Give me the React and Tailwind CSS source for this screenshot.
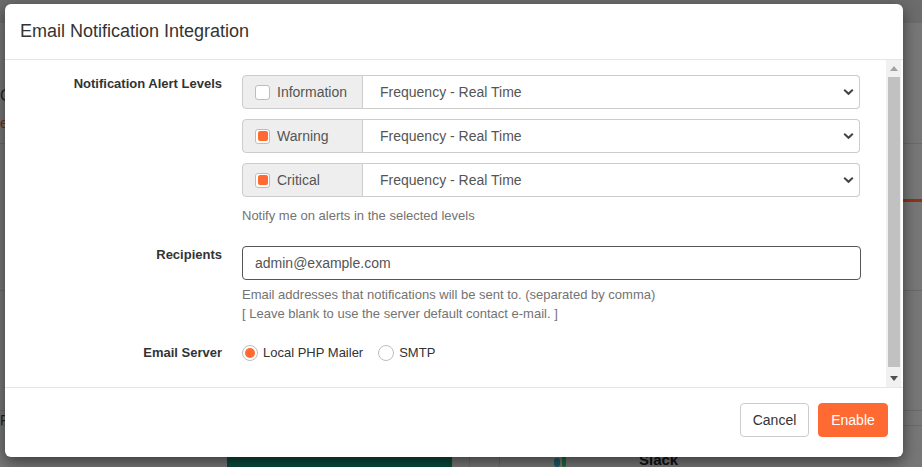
import React, { useState } from "react";

const levels = [
  { name: "Information", checked: false },
  { name: "Warning", checked: true },
  { name: "Critical", checked: true },
];

const Chevron = () => (
  <svg
    width="11"
    height="7"
    viewBox="0 0 11 7"
    className="pointer-events-none absolute right-[6px] top-1/2 -translate-y-1/2"
  >
    <path d="M1.2 1.2 L5.5 5.3 L9.8 1.2" fill="none" stroke="#444" strokeWidth="2" />
  </svg>
);

const Check = ({ checked }) => (
  <span className="flex h-[15px] w-[15px] shrink-0 items-center justify-center rounded-[3px] border border-[#bdbdbd] bg-white">
    {checked && <span className="h-[10px] w-[10px] rounded-[2px] bg-[#ff6a33]" />}
  </span>
);

const Radio = ({ checked }) => (
  <span className="flex h-[16px] w-[16px] shrink-0 items-center justify-center rounded-full border border-[#bdbdbd] bg-white">
    {checked && <span className="h-[10px] w-[10px] rounded-full bg-[#ff6a33]" />}
  </span>
);

const ScrollBar = () => (
  <div className="mr-[2px] flex w-[15px] shrink-0 flex-col bg-[#f1f1f1]">
    <div className="flex h-[17px] items-center justify-center">
      <svg width="8" height="5" viewBox="0 0 8 5">
        <path d="M0 5 L4 0 L8 5 Z" fill="#a3a3a3" />
      </svg>
    </div>
    <div className="flex-1 py-0 pl-[2px] pr-[1px]">
      <div className="h-[290px] bg-[#c1c1c1]" />
    </div>
    <div className="flex h-[17px] items-center justify-center">
      <svg width="8" height="5" viewBox="0 0 8 5">
        <path d="M0 0 L8 0 L4 5 Z" fill="#505050" />
      </svg>
    </div>
  </div>
);

// the dimmed page that sits behind the dialog
const Backdrop = () => (
  <div className="absolute inset-0 bg-[#777777]">
    <div className="h-[23px] bg-[#6c6c6c]" />
    <div className="absolute left-0 top-[84px] text-[16px] text-[#222]">C</div>
    <div className="absolute left-0 top-[112px] text-[15px] text-[#7a2a12]">e</div>
    <div className="absolute left-0 top-[410px] text-[14px] text-[#222]">F</div>
    <div className="absolute left-0 right-0 top-[143px] h-px bg-[#6a6a6a]" />
    <div className="absolute left-0 right-0 top-[290px] h-px bg-[#6a6a6a]" />
    <div className="absolute left-[903px] right-0 top-[199px] h-[3px] bg-[#8a3618]" />
    <div className="absolute left-0 right-0 top-[410px] h-px bg-[#6a6a6a]" />
    <div className="absolute left-0 right-0 top-[425px] h-px bg-[#6a6a6a]" />
    <div className="absolute left-[227px] top-[440px] flex h-[40px] w-[225px] items-end justify-center bg-[#0b4a3c] pb-[22px] text-[13px] text-[#5f8a80]">
      Install
    </div>
    <div className="absolute left-[469px] top-[440px] h-[40px] w-px bg-[#6a6a6a]" />
    <div className="absolute left-[499px] top-[440px] h-[40px] w-px bg-[#6a6a6a]" />
    <div className="absolute left-[554px] top-[458px] h-[9px] w-[6px] rounded-sm bg-[#1d5a6a]" />
    <div className="absolute left-[562px] top-[455px] h-[12px] w-[4px] rounded-sm bg-[#1a6a3a]" />
    <div className="absolute left-[639px] top-[449px] text-[15px] font-bold text-[#111]">Slack</div>
  </div>
);

export default function App() {
  const [server, setServer] = useState("local");

  return (
    <div
      className="relative h-[467px] w-[922px] overflow-hidden"
      style={{ fontFamily: '"Liberation Sans", Arial, sans-serif' }}
    >
      <Backdrop />

      {/* Dialog */}
      <div className="absolute left-[5px] top-[4px] flex h-[453px] w-[898px] flex-col overflow-hidden rounded-[6px] bg-white shadow-[0_5px_15px_rgba(0,0,0,0.5)]">
        <div className="flex h-[56px] shrink-0 items-center border-b border-[#e5e5e5] px-[15px]">
          <h4 className="text-[18px] text-[#333]">Email Notification Integration</h4>
        </div>

        {/* Body */}
        <div className="flex h-[327px] shrink-0">
          <div className="flex-1 overflow-hidden pb-[28px] pr-[26px] pt-[15px]">
            <div className="flex">
              <div className="w-[217px] shrink-0 text-right text-[13px] font-bold leading-[18px] text-[#333]">
                Notification Alert Levels
              </div>
              <div className="ml-[20px] flex-1">
                <div className="flex flex-col gap-[10px]">
                  {levels.map((lvl) => (
                    <div key={lvl.name} className="flex h-[34px]">
                      <div className="flex w-[121px] shrink-0 items-center gap-[7px] rounded-l-[4px] border border-[#ccc] bg-[#eeeeee] pl-[12px] text-[14px] text-[#555]">
                        <Check checked={lvl.checked} />
                        <span>{lvl.name}</span>
                      </div>
                      <div className="relative flex-1">
                        <select className="h-[34px] w-full appearance-none rounded-r-[4px] border border-l-0 border-[#ccc] bg-white pl-[17px] text-[14px] text-[#555] outline-none">
                          <option>Frequency - Real Time</option>
                          <option>Frequency - Hourly</option>
                          <option>Frequency - Daily</option>
                        </select>
                        <Chevron />
                      </div>
                    </div>
                  ))}
                </div>
                <p className="mt-[10px] text-[13px] leading-[18px] text-[#737373]">
                  Notify me on alerts in the selected levels
                </p>
              </div>
            </div>

            <div className="mt-[21px] flex">
              <div className="w-[217px] shrink-0 text-right text-[13px] font-bold leading-[18px] text-[#333]">
                Recipients
              </div>
              <div className="ml-[20px] flex-1">
                <input
                  type="text"
                  defaultValue="admin@example.com"
                  className="h-[34px] w-[619px] rounded-[4px] border border-[#555] px-[12px] text-[14px] text-[#555] outline-none"
                />
                <p className="mt-[5px] text-[13px] leading-[19px] text-[#737373]">
                  Email addresses that notifications will be sent to. (separated by comma)
                  <br />[ Leave blank to use the server default contact e-mail. ]
                </p>
              </div>
            </div>

            <div className="mt-[20px] flex items-center">
              <div className="w-[217px] shrink-0 text-right text-[13px] font-bold leading-[18px] text-[#333]">
                Email Server
              </div>
              <div className="ml-[20px] flex items-center text-[13px] text-[#333]">
                <label className="flex cursor-pointer items-center gap-[5px]" onClick={() => setServer("local")}>
                  <Radio checked={server === "local"} />
                  <span>Local PHP Mailer</span>
                </label>
                <label className="ml-[15px] flex cursor-pointer items-center gap-[5px]" onClick={() => setServer("smtp")}>
                  <Radio checked={server === "smtp"} />
                  <span>SMTP</span>
                </label>
              </div>
            </div>
          </div>
          <ScrollBar />
        </div>

        {/* Footer */}
        <div className="flex flex-1 items-start justify-end gap-[9px] border-t border-[#e5e5e5] px-[15px] pt-[15px]">
          <button className="h-[34px] w-[69px] rounded-[4px] border border-[#ccc] bg-white text-[14px] text-[#333]">
            Cancel
          </button>
          <button className="h-[34px] w-[70px] rounded-[4px] border border-[#ff6a33] bg-[#ff6a33] text-[14px] text-white">
            Enable
          </button>
        </div>
      </div>
    </div>
  );
}
